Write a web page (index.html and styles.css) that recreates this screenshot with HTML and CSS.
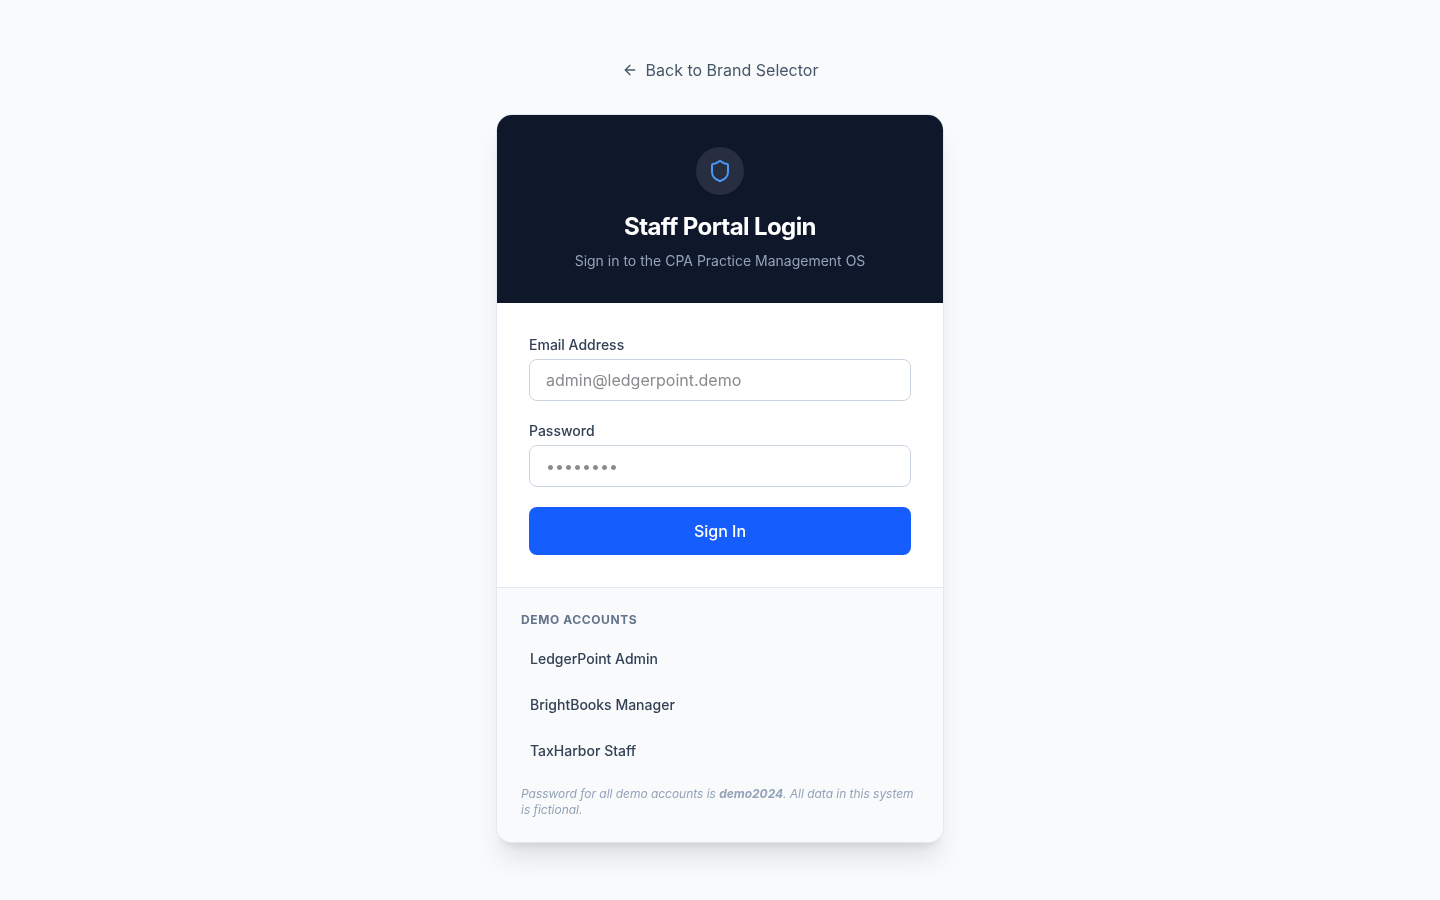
FILE: index.html
```html
<!DOCTYPE html>
<html lang="en">
<head>
<meta charset="utf-8">
<title>Staff Portal Login</title>
<link rel="stylesheet" href="styles.css">
</head>
<body>
<main class="page">
  <a class="back" href="#">
    <svg class="back-icon" viewBox="0 0 24 24" fill="none" stroke="currentColor" stroke-width="2" stroke-linecap="round" stroke-linejoin="round"><path d="m12 19-7-7 7-7"/><path d="M19 12H5"/></svg>
    <span>Back to Brand Selector</span>
  </a>
  <section class="card">
    <header class="head">
      <div class="badge">
        <svg class="shield" viewBox="0 0 24 24" fill="none" stroke="currentColor" stroke-width="2" stroke-linecap="round" stroke-linejoin="round"><path d="M20 13c0 5-3.5 7.5-7.66 8.95a1 1 0 0 1-.67-.01C7.5 20.5 4 18 4 13V6a1 1 0 0 1 1-1c2 0 4.500-1.200 6.240-2.720a1.170 1.170 0 0 1 1.520 0C14.510 3.810 17 5 19 5a1 1 0 0 1 1 1z"/></svg>
      </div>
      <h1 class="title">Staff Portal Login</h1>
      <p class="sub">Sign in to the CPA Practice Management OS</p>
    </header>
    <form class="form">
      <div class="field">
        <label class="label" for="email">Email Address</label>
        <input class="input" id="email" type="email" placeholder="admin@ledgerpoint.demo">
      </div>
      <div class="field">
        <label class="label" for="password">Password</label>
        <input class="input" id="password" type="password" placeholder="••••••••">
      </div>
      <button class="submit" type="button">Sign In</button>
    </form>
    <div class="demo">
      <h2 class="demo-title">Demo Accounts</h2>
      <div class="demo-list">
        <button class="demo-item" type="button">LedgerPoint Admin</button>
        <button class="demo-item" type="button">BrightBooks Manager</button>
        <button class="demo-item" type="button">TaxHarbor Staff</button>
      </div>
      <p class="note">Password for all demo accounts is <strong>demo2024</strong>. All data in this system is fictional.</p>
    </div>
  </section>
</main>
</body>
</html>
```
FILE: styles.css
```css
* { box-sizing: border-box; }
html, body { margin: 0; padding: 0; }
body {
  background: #f8fafc;
  color: #0f172a;
  font-family: Inter, "Liberation Sans", sans-serif;
  font-size: 16px;
  line-height: 24px;
}
.page {
  min-height: 100vh;
  display: flex;
  flex-direction: column;
  align-items: center;
  justify-content: center;
  will-change: transform;
}
.back {
  display: flex;
  align-items: center;
  gap: 8px;
  margin-bottom: 32px;
  color: #475569;
  text-decoration: none;
  font-size: 16px;
  line-height: 24px;
}
.back-icon { width: 16px; height: 16px; }
.card {
  width: 448px;
  background: #fff;
  border: 1px solid #e2e8f0;
  border-radius: 16px;
  overflow: hidden;
  box-shadow: 0 20px 25px -5px rgba(0,0,0,.1), 0 8px 10px -6px rgba(0,0,0,.1);
}
.head {
  background: #0f172a;
  padding: 32px;
  display: flex;
  flex-direction: column;
  align-items: center;
  text-align: center;
}
.badge {
  width: 48px;
  height: 48px;
  border-radius: 50%;
  background: rgba(255,255,255,.1);
  display: flex;
  align-items: center;
  justify-content: center;
  margin-bottom: 16px;
}
.shield { width: 24px; height: 24px; color: #4b97f8; }
.title {
  margin: 0;
  color: #fff;
  font-size: 24px;
  line-height: 32px;
  font-weight: 700;
  letter-spacing: -0.6px;
}
.sub {
  margin: 8px 0 0;
  color: #94a3b8;
  font-size: 14px;
  line-height: 20px;
}
.form {
  padding: 32px;
  display: flex;
  flex-direction: column;
  gap: 20px;
}
.field { display: flex; flex-direction: column; gap: 4px; }
.label {
  color: #334155;
  font-size: 14px;
  line-height: 20px;
  font-weight: 500;
}
.input {
  height: 42px;
  width: 100%;
  padding: 8px 16px;
  background: #fff;
  border: 1px solid #cbd5e1;
  border-radius: 8px;
  font-family: inherit;
  font-size: 16px;
  line-height: 24px;
  color: #0f172a;
  outline: none;
}
.input::placeholder { color: #8a8a8f; }
.submit {
  height: 48px;
  border: 0;
  border-radius: 8px;
  background: #155dfc;
  color: #fff;
  font-family: inherit;
  font-size: 16px;
  line-height: 24px;
  font-weight: 500;
}
.demo {
  background: #f8fafc;
  border-top: 1px solid #e2e8f0;
  padding: 24px;
}
.demo-title {
  margin: 0 0 12px;
  color: #64748b;
  font-size: 12px;
  line-height: 16px;
  font-weight: 700;
  letter-spacing: 0.6px;
  text-transform: uppercase;
}
.demo-list { display: flex; flex-direction: column; gap: 8px; }
.demo-item {
  display: block;
  width: 100%;
  padding: 8px;
  background: transparent;
  border: 1px solid transparent;
  border-radius: 8px;
  text-align: left;
  color: #334155;
  font-family: inherit;
  font-size: 14px;
  line-height: 20px;
  font-weight: 500;
}
.note {
  margin: 16px 0 0;
  color: #94a3b8;
  font-size: 12px;
  line-height: 16px;
  font-style: italic;
  letter-spacing: -0.03px;
}
.note strong { font-weight: 700; }
```
